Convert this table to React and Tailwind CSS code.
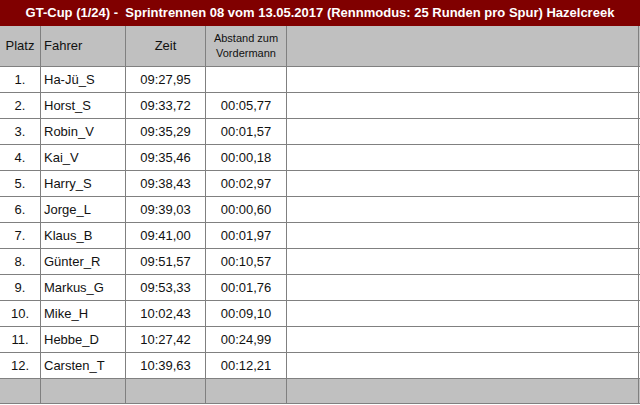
import React from "react";

const results = [
  { platz: "1.", fahrer: "Ha-Jü_S", zeit: "09:27,95", abstand: "" },
  { platz: "2.", fahrer: "Horst_S", zeit: "09:33,72", abstand: "00:05,77" },
  { platz: "3.", fahrer: "Robin_V", zeit: "09:35,29", abstand: "00:01,57" },
  { platz: "4.", fahrer: "Kai_V", zeit: "09:35,46", abstand: "00:00,18" },
  { platz: "5.", fahrer: "Harry_S", zeit: "09:38,43", abstand: "00:02,97" },
  { platz: "6.", fahrer: "Jorge_L", zeit: "09:39,03", abstand: "00:00,60" },
  { platz: "7.", fahrer: "Klaus_B", zeit: "09:41,00", abstand: "00:01,97" },
  { platz: "8.", fahrer: "Günter_R", zeit: "09:51,57", abstand: "00:10,57" },
  { platz: "9.", fahrer: "Markus_G", zeit: "09:53,33", abstand: "00:01,76" },
  { platz: "10.", fahrer: "Mike_H", zeit: "10:02,43", abstand: "00:09,10" },
  { platz: "11.", fahrer: "Hebbe_D", zeit: "10:27,42", abstand: "00:24,99" },
  { platz: "12.", fahrer: "Carsten_T", zeit: "10:39,63", abstand: "00:12,21" },
];

const cols = "grid grid-cols-[41px_85px_80px_81px_352px] border-b border-[#808080]";
const cell = "border-r border-[#808080] flex items-center";

const App = () => {
  return (
    <div className="w-[640px] h-[405px] bg-white text-[13px] text-[#111] font-['Liberation_Sans',Arial,sans-serif] overflow-hidden">
      {/* title */}
      <div className="h-[26px] bg-[#800000] text-white font-bold flex items-center justify-center whitespace-pre">
        GT-Cup (1/24) -  Sprintrennen 08 vom 13.05.2017 (Rennmodus: 25 Runden pro Spur) Hazelcreek
      </div>

      {/* header */}
      <div className={`${cols} h-[41px] bg-[#c0c0c0]`}>
        <div className={`${cell} justify-center`}>Platz</div>
        <div className={`${cell} pl-[3px]`}>Fahrer</div>
        <div className={`${cell} justify-center`}>Zeit</div>
        <div className={`${cell} justify-center text-center text-[11px] leading-[15px]`}>
          Abstand zum
          <br />
          Vordermann
        </div>
        <div className={cell}></div>
      </div>

      {results.map((r) => (
        <div key={r.platz} className={`${cols} h-[26px]`}>
          <div className={`${cell} justify-center`}>{r.platz}</div>
          <div className={`${cell} pl-[3px]`}>{r.fahrer}</div>
          <div className={`${cell} justify-center`}>{r.zeit}</div>
          <div className={`${cell} justify-center`}>{r.abstand}</div>
          <div className={cell}></div>
        </div>
      ))}

      {/* footer */}
      <div className={`${cols} h-[25px] bg-[#c0c0c0]`}>
        <div className={cell}></div>
        <div className={cell}></div>
        <div className={cell}></div>
        <div className={cell}></div>
        <div className={cell}></div>
      </div>
    </div>
  );
};

export default App;
